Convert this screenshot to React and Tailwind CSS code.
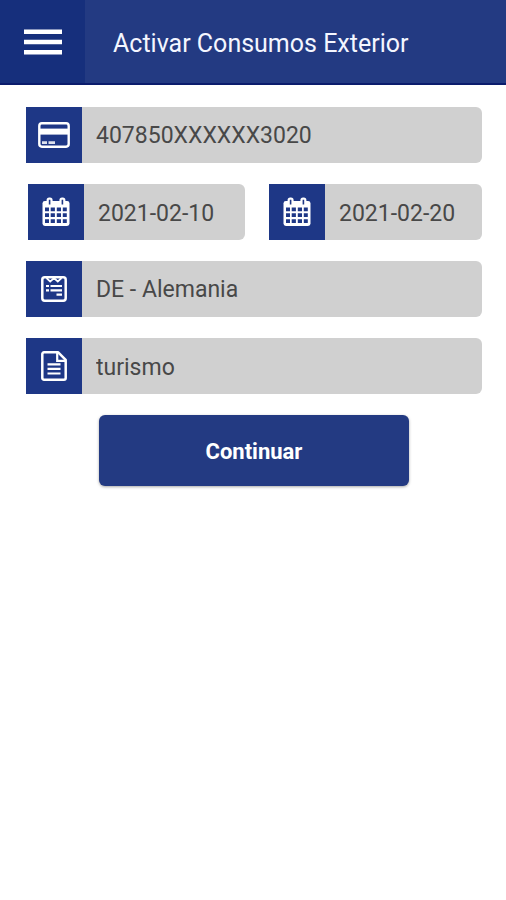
function CardIcon({ title }) {
  return (
    <svg width="32" height="26" viewBox="0 0 32 26" fill="none" role="img" aria-label={title}>
      <rect x="1.3" y="1.3" width="29.4" height="23.4" rx="2.6" stroke="#fff" strokeWidth="2.4" />
      <path d="M1 6.6h30v6H1z" fill="#fff" />
      <path d="M4 19.3h5v2.8H4zM10.5 19.3h6.5v2.8h-6.5z" fill="#fff" opacity="0.85" />
    </svg>
  );
}

function CalendarIcon({ title }) {
  return (
    <svg width="28" height="30" viewBox="0 0 28 30" role="img" aria-label={title}>
      <rect x="0.5" y="4" width="27" height="25" rx="2.4" fill="#fff" />
      <rect x="4.6" y="0.5" width="6" height="9" rx="2.6" fill="#fff" />
      <rect x="17.4" y="0.5" width="6" height="9" rx="2.6" fill="#fff" />
      <path d="M6.8 2.8h1.6v4.6H6.8zM19.6 2.8h1.6v4.6h-1.6z" fill="#1e3786" />
      <path
        d="M3 10.5h4v3.7H3zM8.7 10.5h4.2v3.7H8.7zM14.8 10.5H19v3.7h-4.2zM20.8 10.5h4v3.7h-4zM3 16.2h4v3.9H3zM8.7 16.2h4.2v3.9H8.7zM14.8 16.2H19v3.9h-4.2zM20.8 16.2h4v3.9h-4zM3 22.2h4v3.7H3zM8.7 22.2h4.2v3.7H8.7zM14.8 22.2H19v3.7h-4.2zM20.8 22.2h4v3.7h-4z"
        fill="#1e3786"
      />
    </svg>
  );
}

function TicketIcon({ title }) {
  return (
    <svg width="26" height="26" viewBox="0 0 26 26" fill="none" role="img" aria-label={title}>
      <rect x="1.3" y="1.3" width="23.4" height="23.4" rx="2.4" stroke="#fff" strokeWidth="2.5" />
      <path d="M5.5 2l3.7 3.6L13 2l3.8 3.6L20.500 2" stroke="#fff" strokeWidth="1.8" />
      <path d="M5 10h3M9.500 10H21M5 14.400h3M9.500 14.400H21M15.500 18.600H21" stroke="#fff" strokeWidth="2.200" />
    </svg>
  );
}

function DocumentIcon({ title }) {
  return (
    <svg width="26" height="30" viewBox="0 0 26 30" fill="none" role="img" aria-label={title}>
      <path
        d="M3 1.3h14.2l7.5 7.5V27a1.7 1.7 0 0 1-1.7 1.7H3A1.7 1.7 0 0 1 1.3 27V3A1.7 1.7 0 0 1 3 1.3z"
        stroke="#fff"
        strokeWidth="2.5"
        strokeLinejoin="round"
      />
      <path d="M16.2 1.5v8.3h8.3" stroke="#fff" strokeWidth="2.2" />
      <path d="M6.5 13.3h13M6.5 17.900h13M6.5 22.500h13" stroke="#fff" strokeWidth="2.200" />
    </svg>
  );
}

const controlClass =
  'h-14 w-full min-w-0 flex-1 appearance-none rounded-r-md bg-[#d0d0d0] px-3.5 pt-0.5 text-[23px] text-[#484848] outline-none';

function Field({ id, icon, children }) {
  return (
    <div className="flex min-w-0">
      <label htmlFor={id} className="flex size-14 shrink-0 items-center justify-center bg-[#1e3786]">
        {icon}
      </label>
      {children}
    </div>
  );
}

export default function App() {
  return (
    <div className="min-h-screen bg-white font-['Roboto',sans-serif]">
      <header className="flex h-[85px] border-b-2 border-[#0b1c6c] bg-[#233a82]">
        <button
          type="button"
          aria-label="Menú"
          className="flex w-[85px] shrink-0 items-center justify-center bg-[#162f7c]"
        >
          <svg width="38" height="26" viewBox="0 0 38 26" aria-hidden="true">
            <path d="M0 0.5h38v4.5H0zM0 10.7h38v4.5H0zM0 21h38v4.5H0z" fill="#fff" />
          </svg>
        </button>
        <h1 className="flex items-center pt-1 pl-7 text-[25px] text-[#f4f6ff]">Activar Consumos Exterior</h1>
      </header>

      <form className="flex flex-col gap-[21px] pt-[22px] pr-6 pl-[26px]" onSubmit={(e) => e.preventDefault()}>
        <Field id="card" icon={<CardIcon title="Tarjeta" />}>
          <select id="card" className={controlClass}>
            <option>407850XXXXXX3020</option>
          </select>
        </Field>

        <div className="grid grid-cols-[217fr_213fr] gap-6 pl-0.5">
          <Field id="from" icon={<CalendarIcon title="Desde" />}>
            <input id="from" type="text" defaultValue="2021-02-10" className={controlClass} />
          </Field>
          <Field id="to" icon={<CalendarIcon title="Hasta" />}>
            <input id="to" type="text" defaultValue="2021-02-20" className={controlClass} />
          </Field>
        </div>

        <Field id="country" icon={<TicketIcon title="País" />}>
          <select id="country" className={controlClass}>
            <option>DE - Alemania</option>
          </select>
        </Field>

        <Field id="reason" icon={<DocumentIcon title="Motivo" />}>
          <input id="reason" type="text" defaultValue="turismo" className={controlClass} />
        </Field>

        <button
          type="submit"
          className="mx-auto h-[71px] w-[68%] rounded-md bg-[#233a82] pt-0.5 text-[22px] font-bold text-white shadow-[0_1px_3px_rgba(0,0,0,0.35)]"
        >
          Continuar
        </button>
      </form>
    </div>
  );
}
